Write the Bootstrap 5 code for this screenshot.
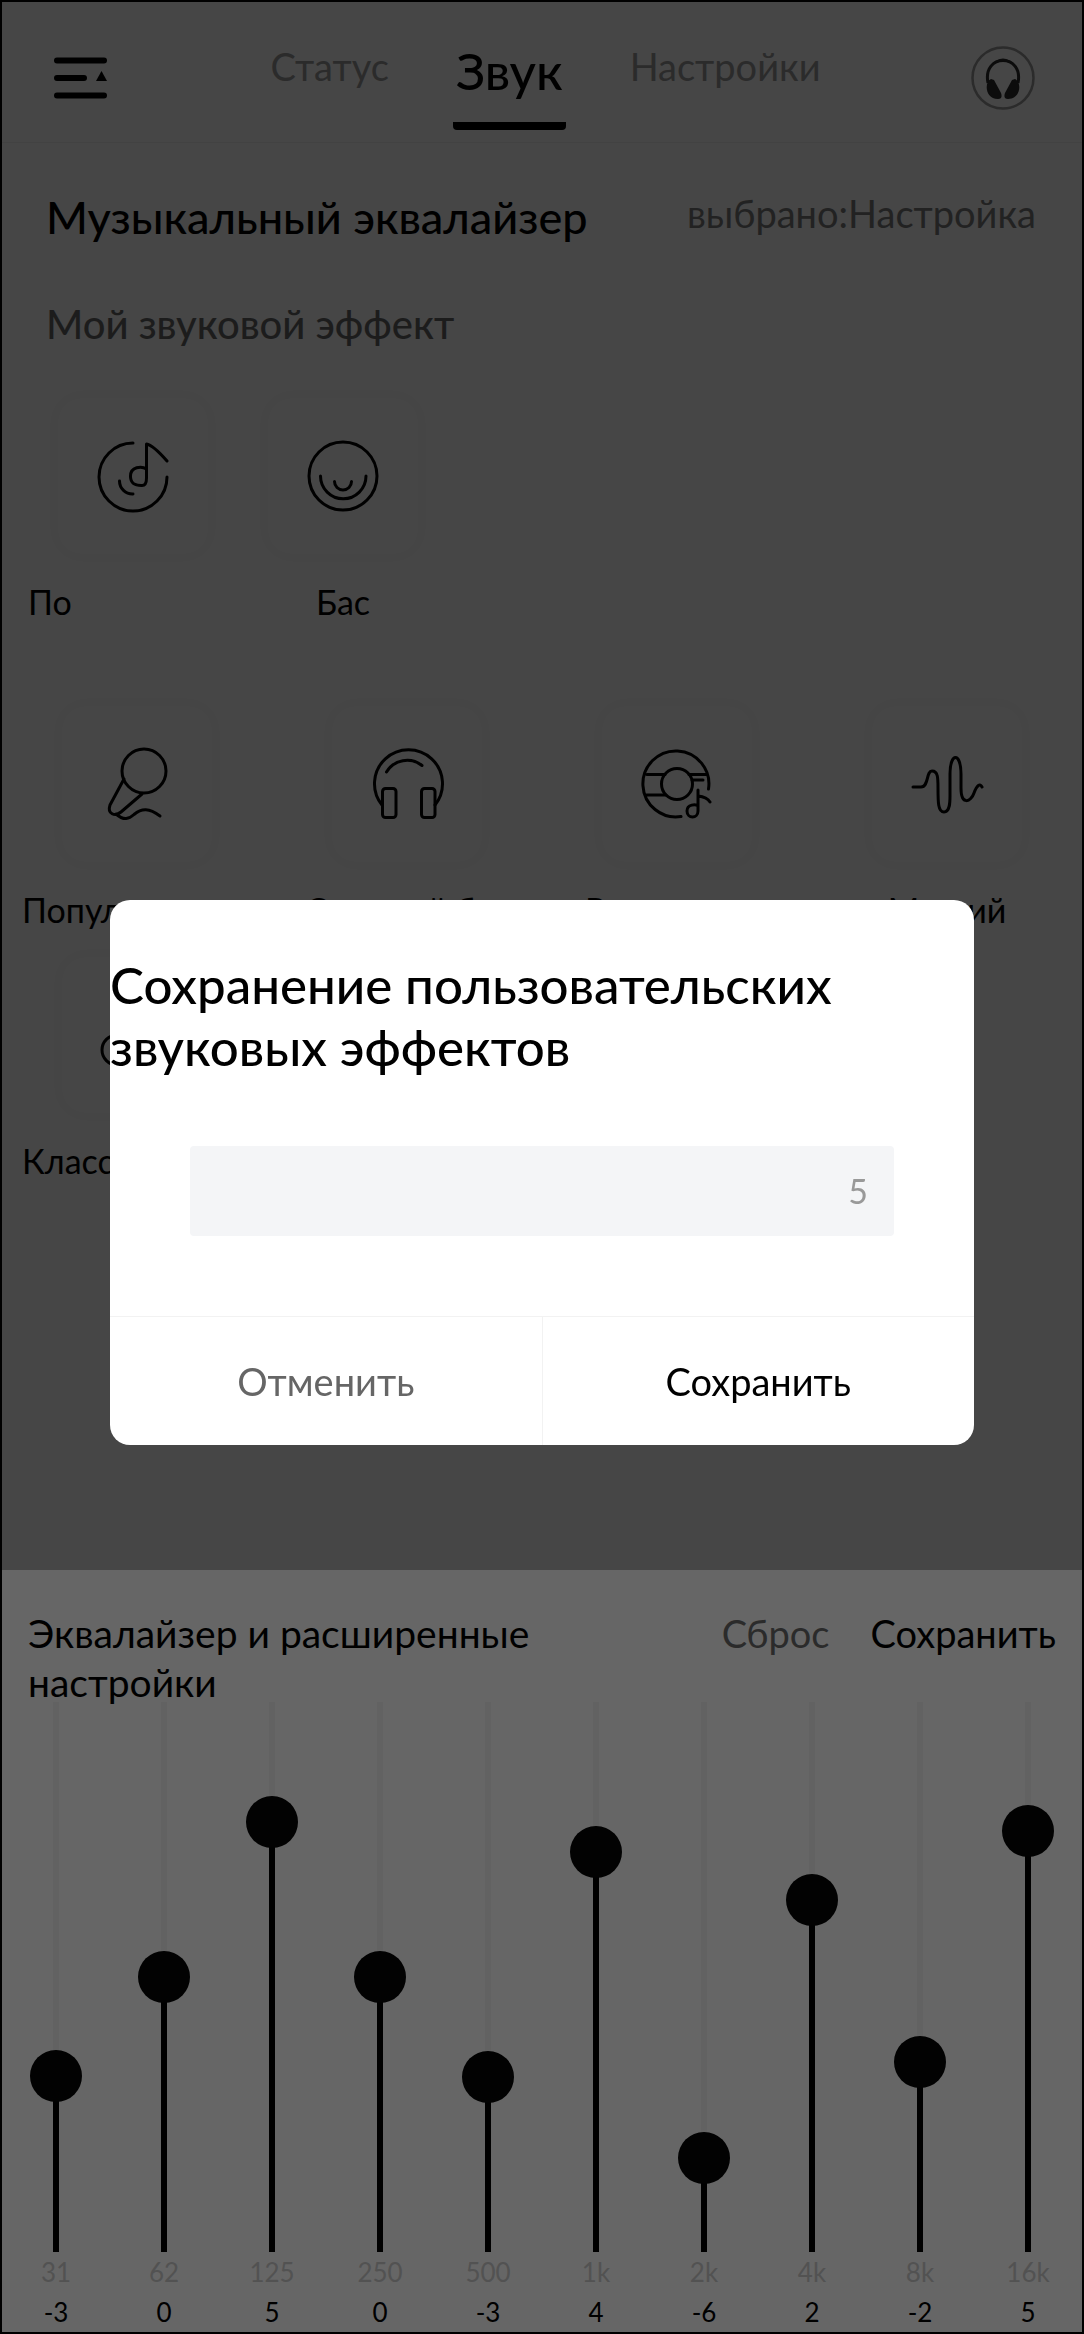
<!DOCTYPE html>
<html lang="ru">
<head>
<meta charset="utf-8">
<meta name="viewport" content="width=device-width, initial-scale=1">
<title>Звук</title>
<link rel="stylesheet" href="https://cdn.jsdelivr.net/npm/bootstrap@5.3.0/dist/css/bootstrap.min.css">
<script src="https://cdn.jsdelivr.net/npm/bootstrap@5.3.0/dist/js/bootstrap.bundle.min.js"></script>
<style>
  body { font-family: Lato, "Noto Sans", sans-serif; font-size: 38px; line-height: 46px; color: #000; background: #464646; }
  button { color: inherit; }
  .app-frame { min-height: 100vh; border: 2px solid #000; }
  .app-header { height: 141px; padding: 12px 47px 0 52px; border-bottom: 1px solid #424242; }
  .menu-btn { width: 66px; }
  .tab-bar { gap: 64px; margin-bottom: 12px; }
  .tab-bar a { color: #2b2b2b; text-decoration: none; line-height: 54px; }
  .tab-bar a.current { color: #000; font-size: 51px; font-weight: 500; line-height: 64px; padding: 0 3px 19px; border-bottom: 8px solid #000; border-radius: 0 0 4px 4px; }
  .eq-main { padding-top: 46px; }
  .eq-heading { padding: 0 46px 0 44px; margin-bottom: 56px; }
  .eq-heading h1 { font-size: 45px; line-height: 56px; font-weight: 500; }
  .eq-chosen { color: #222; line-height: 48px; }
  .eq-main h2 { font-size: 40px; line-height: 46px; font-weight: 500; color: #1c1c1c; padding-left: 44px; margin-bottom: 51px; }
  .own-effects { padding-left: 26px; margin-bottom: 84px; }
  .own-effects .effect { width: 210px; }
  .preset-grid { row-gap: 27px; }
  .effect, .effect:hover { font-size: 34px; line-height: 40px; white-space: nowrap; color: #000; }
  .effect-tile { width: 150px; height: 156px; margin-bottom: 28px; border-radius: 24px; box-shadow: 0 0 14px rgba(0,0,0,.03); }
  .effect-tile svg { width: 80px; height: 80px; }
  .line-art { fill: none; stroke: #000; stroke-width: 3; stroke-linejoin: round; stroke-linecap: round; }
  .label-start { align-self: stretch; text-align: left; padding-left: 20px; }
  .own-effects .label-start { padding-left: 0; }
  .mixer { background: #666; }
  .mixer-head { padding: 39px 26px 0 26px; line-height: 49px; }
  .mixer-head h2 { font-size: 39px; line-height: 49px; font-weight: 400; max-width: 560px; }
  .mixer-actions { gap: 41px; }
  .mixer-actions .reset { color: #2b2b2b; }
  .bands { margin-top: -5px; }
  .band { flex: 1 1 0; font-size: 26px; line-height: 40px; text-align: center; }
  .band label { color: #525252; }
  .band-track { position: relative; height: 550px; }
  .band-track input { position: absolute; left: 50%; top: 50%; width: 550px; height: 52px; margin: 0; transform: translate(-50%, -50%) rotate(-90deg); appearance: none; -webkit-appearance: none; background: none; }
  .band-track input::-webkit-slider-runnable-track { height: 6px; background: linear-gradient(to right, #000 var(--level), #626262 var(--level)); }
  .band-track input::-webkit-slider-thumb { -webkit-appearance: none; width: 52px; height: 52px; margin-top: -23px; border-radius: 50%; background: #020202; }
  .save-modal { padding: 11px 2px 0; }
  .save-modal .modal-dialog { width: 80%; max-width: none; margin: 0 auto; min-height: 100%; }
  .save-modal .modal-content { border: 0; border-radius: 20px; padding-top: 54px; background: #fff; color: #000; }
  .save-modal h2 { font-size: 51px; line-height: 62px; font-weight: 500; max-width: 760px; margin-bottom: 68px; }
  .name-field { margin: 0 80px 80px; height: 90px; background: #f4f5f7; border-radius: 4px; padding: 0 26px 0 20px; }
  .name-field input { background: none; border: 0; outline: 0; min-width: 0; }
  .name-field span { font-size: 34px; color: #999; }
  .modal-actions { border-top: 1px solid #f2f2f2; }
  .modal-actions button { height: 128px; flex: 1 1 0; }
  .modal-actions .cancel { color: #666; border-right: 1px solid #f2f2f2 !important; }
</style>
</head>
<body>
<div class="app-frame d-flex flex-column">
  <header class="app-header d-flex align-items-center justify-content-between">
    <button class="menu-btn btn p-0 border-0 text-start d-flex" aria-label="Меню">
      <svg width="54" height="42" viewBox="0 0 54 42"><path d="M3 3.500H50M3 21H30M3 38.500H50" stroke="#000" stroke-width="6" stroke-linecap="round"/><path d="M47.500 14 53 24H42Z"/></svg>
    </button>
    <nav class="tab-bar d-flex align-items-start align-self-end">
      <a href="#">Статус</a>
      <a href="#" class="current" aria-current="page">Звук</a>
      <a href="#">Настройки</a>
    </nav>
    <button class="btn p-0 border-0 d-flex" aria-label="Наушники">
      <svg width="64" height="64" viewBox="0 0 64 64"><circle cx="32" cy="32" r="30.500" fill="none" stroke="#2b2b2b" stroke-width="2.500"/><path d="M17 37C11 7 53 7 47 37" fill="none" stroke="#0c0c0c" stroke-width="3"/><path d="M20 19Q32 6 44 19L40 17Q32 14 24 17Z" fill="#0c0c0c"/><path d="M20 33C13 36 14 53 27 53Q32 53 30 47L23 34ZM44 33C51 36 50 53 37 53Q32 53 34 47L41 34Z" fill="#0c0c0c"/></svg>
    </button>
  </header>

  <main class="eq-main flex-grow-1">
    <div class="eq-heading d-flex justify-content-between align-items-start">
      <h1 class="mb-0">Музыкальный эквалайзер</h1>
      <span class="eq-chosen">выбрано:Настройка</span>
    </div>
    <h2>Мой звуковой эффект</h2>
    <div class="own-effects d-flex">
      <button class="effect btn p-0 border-0 d-flex flex-column align-items-center">
        <span class="effect-tile d-flex align-items-center justify-content-center">
          <svg class="line-art" viewBox="0 0 80 80"><path d="M40 7A34 34 0 1 0 74 41M53.500 33C49 30 37 30 37.500 41 38 50 46 49.500 49 49.500 53 49.500 53.500 46 53.500 42V8Q60 9 74 25M26.500 45A13 13 0 0 0 40 58"/></svg>
        </span>
        <span class="label-start">По</span>
      </button>
      <button class="effect btn p-0 border-0 d-flex flex-column align-items-center">
        <span class="effect-tile d-flex align-items-center justify-content-center">
          <svg class="line-art" viewBox="0 0 80 80"><circle cx="40" cy="40" r="34"/><path d="M17.500 40A22.500 22.500 0 0 0 63 40M31.500 45.500A8.500 8.500 0 0 0 48.500 45.500"/></svg>
        </span>
        <span>Бас</span>
      </button>
    </div>
    <div class="preset-grid row g-0">
      <button class="effect col-3 btn p-0 border-0 d-flex flex-column align-items-center">
        <span class="effect-tile d-flex align-items-center justify-content-center">
          <svg class="line-art" viewBox="0 0 80 80"><circle cx="47" cy="27" r="22"/><path d="M27 35 13 61C10 70 18 73 24 68L45 50M19 70C27 77 32 75 37 70.500 45 64 52 64 63 72"/></svg>
        </span>
        <span class="label-start">Популярная</span>
      </button>
      <button class="effect col-3 btn p-0 border-0 d-flex flex-column align-items-center">
        <span class="effect-tile d-flex align-items-center justify-content-center">
          <svg class="line-art" viewBox="0 0 80 80"><path d="M15 61A34 34 0 1 1 68 61M19.500 28A24 24 0 0 1 55 21.500"/><rect x="15.500" y="44.500" width="13.500" height="29" rx="3"/><rect x="54.500" y="44.500" width="13.500" height="29" rx="3"/></svg>
        </span>
        <span>Сильный бас</span>
      </button>
      <button class="effect col-3 btn p-0 border-0 d-flex flex-column align-items-center">
        <span class="effect-tile d-flex align-items-center justify-content-center">
          <svg class="line-art" viewBox="0 0 80 80"><path d="M71.500 45A33 33 0 1 0 44 72.500M10 30.500H28M9.500 51H29M52 30.500H69M55 36H66M61 46V67C61 75 50 75 50 67 50 60 59 60 61 62M61 52Q70 53 73 58"/><circle cx="40" cy="40" r="15.500"/></svg>
        </span>
        <span>Рок-музыка</span>
      </button>
      <button class="effect col-3 btn p-0 border-0 d-flex flex-column align-items-center">
        <span class="effect-tile d-flex align-items-center justify-content-center">
          <svg class="line-art" viewBox="0 0 80 80"><path d="M6 43H14C22 43 19 27 25 27 31 27 31 34 31 44 31 58 31 68 37 68 43 68 43 58 43 52V30C43 8 54 8 54 30V44C54 62 64 58 67 49 70 41 73 39 75 43"/></svg>
        </span>
        <span>Мягкий</span>
      </button>
      <button class="effect col-3 btn p-0 border-0 d-flex flex-column align-items-center">
        <span class="effect-tile d-flex align-items-center justify-content-center">
          <svg class="line-art" viewBox="0 0 80 80"><circle cx="20" cy="55" r="15"/><path d="M35 55V10L70 6V48"/><circle cx="58" cy="48" r="12"/></svg>
        </span>
        <span class="label-start">Классическая</span>
      </button>
    </div>
  </main>

  <section class="mixer">
    <div class="mixer-head d-flex justify-content-between align-items-start">
      <h2 class="mb-0">Эквалайзер и расширенные настройки</h2>
      <div class="mixer-actions d-flex">
        <button class="reset bg-transparent border-0 p-0">Сброс</button>
        <button class="bg-transparent border-0 p-0">Сохранить</button>
      </div>
    </div>
    <div class="bands d-flex">
      <div class="band d-flex flex-column"><div class="band-track"><input id="b31" type="range" min="26" max="524" value="176" style="--level:176px"></div><label for="b31">31</label><output for="b31">-3</output></div>
      <div class="band d-flex flex-column"><div class="band-track"><input id="b62" type="range" min="26" max="524" value="275" style="--level:275px"></div><label for="b62">62</label><output for="b62">0</output></div>
      <div class="band d-flex flex-column"><div class="band-track"><input id="b125" type="range" min="26" max="524" value="430" style="--level:430px"></div><label for="b125">125</label><output for="b125">5</output></div>
      <div class="band d-flex flex-column"><div class="band-track"><input id="b250" type="range" min="26" max="524" value="275" style="--level:275px"></div><label for="b250">250</label><output for="b250">0</output></div>
      <div class="band d-flex flex-column"><div class="band-track"><input id="b500" type="range" min="26" max="524" value="175" style="--level:175px"></div><label for="b500">500</label><output for="b500">-3</output></div>
      <div class="band d-flex flex-column"><div class="band-track"><input id="b1k" type="range" min="26" max="524" value="400" style="--level:400px"></div><label for="b1k">1k</label><output for="b1k">4</output></div>
      <div class="band d-flex flex-column"><div class="band-track"><input id="b2k" type="range" min="26" max="524" value="94" style="--level:94px"></div><label for="b2k">2k</label><output for="b2k">-6</output></div>
      <div class="band d-flex flex-column"><div class="band-track"><input id="b4k" type="range" min="26" max="524" value="352" style="--level:352px"></div><label for="b4k">4k</label><output for="b4k">2</output></div>
      <div class="band d-flex flex-column"><div class="band-track"><input id="b8k" type="range" min="26" max="524" value="190" style="--level:190px"></div><label for="b8k">8k</label><output for="b8k">-2</output></div>
      <div class="band d-flex flex-column"><div class="band-track"><input id="b16k" type="range" min="26" max="524" value="421" style="--level:421px"></div><label for="b16k">16k</label><output for="b16k">5</output></div>
    </div>
  </section>
</div>

<div class="save-modal modal show d-block" role="dialog" aria-modal="true" aria-labelledby="saveTitle">
  <div class="modal-dialog modal-dialog-centered">
    <div class="modal-content overflow-hidden">
      <h2 id="saveTitle">Сохранение пользовательских звуковых эффектов</h2>
      <div class="name-field d-flex align-items-center">
        <input class="flex-grow-1" type="text" maxlength="5" aria-label="Название эффекта">
        <span>5</span>
      </div>
      <div class="modal-actions d-flex">
        <button class="cancel bg-transparent border-0 p-0">Отменить</button>
        <button class="bg-transparent border-0 p-0">Сохранить</button>
      </div>
    </div>
  </div>
</div>
</body>
</html>
